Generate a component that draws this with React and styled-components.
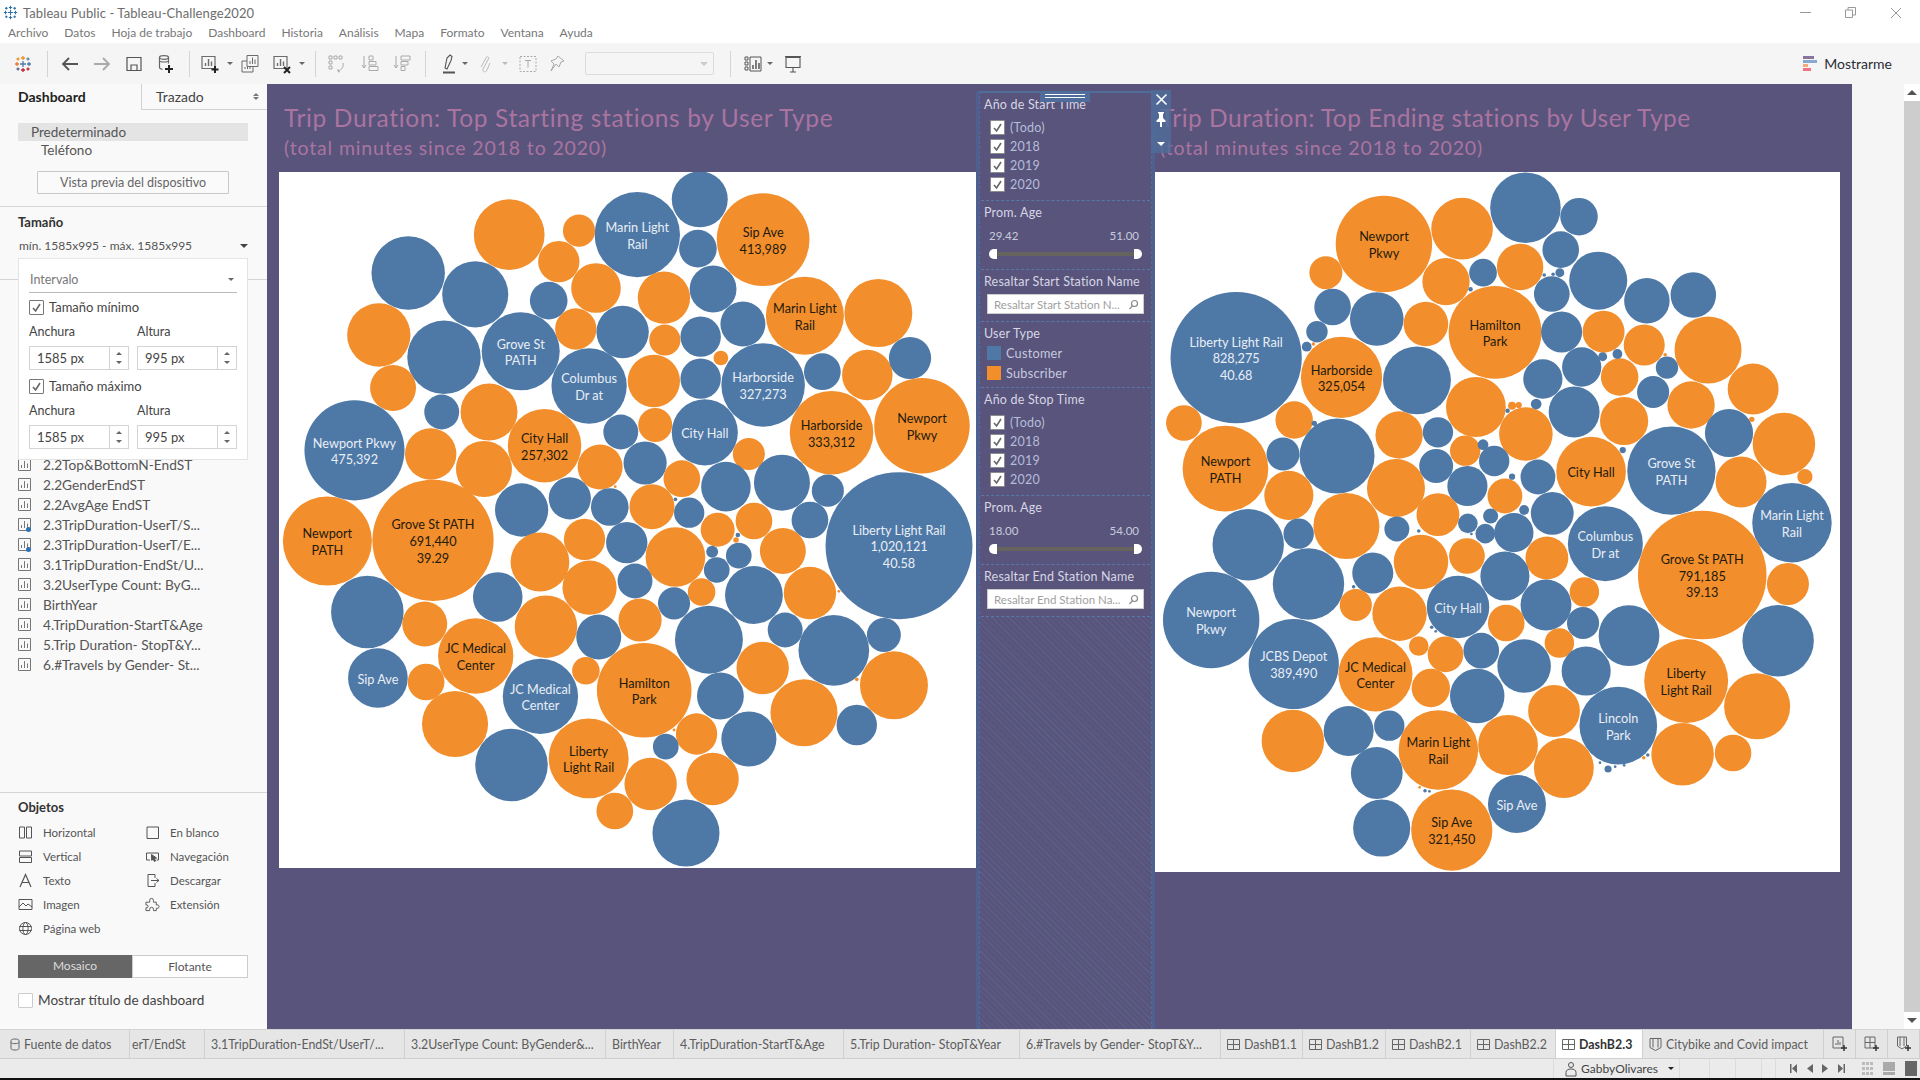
import React from 'react';
import styled, { createGlobalStyle } from 'styled-components';

const FONT = '"Lato", "Liberation Sans", sans-serif';
const BLUE = '#4e79a7';
const ORANGE = '#f28e2b';
const PURPLE = '#58547c';

const Global = createGlobalStyle`
  html, body { margin: 0; padding: 0; background: #fff; }
  body { font-family: ${FONT}; overflow: hidden; }
  * { box-sizing: border-box; }
`;

const Win = styled.div`width:1920px;height:1080px;display:flex;flex-direction:column;background:#fff;overflow:hidden;`;
const TitleBar = styled.div`height:22px;display:flex;align-items:center;padding:3px 18px 0 3px;font-size:13px;color:#6d6d6d;`;
const TitleText = styled.span`margin-left:5px;letter-spacing:.1px;`;
const WinBtns = styled.div`margin-left:auto;display:flex;gap:34px;align-items:center;`;
const MenuBar = styled.div`height:21px;display:flex;align-items:center;gap:16px;padding-left:8px;font-size:12px;color:#777;`;
const Toolbar = styled.div`height:41px;background:#f5f5f5;display:flex;align-items:center;`;
const Tool = styled.div`flex:none;width:${p=>p.$w||20}px;margin-left:${p=>p.$ml||0}px;height:24px;display:flex;align-items:center;justify-content:center;`;
const Sep = styled.div`flex:none;width:1px;height:26px;background:#d4d4d4;margin-left:${p=>p.$ml}px;`;
const ToolSelect = styled.div`flex:none;width:129px;height:23px;margin-left:18px;border:1px solid #dcdcdc;border-radius:2px;display:flex;align-items:center;justify-content:flex-end;padding-right:5px;`;
const Caret = styled.span`display:inline-block;width:0;height:0;border-left:${p=>p.$s||3}px solid transparent;border-right:${p=>p.$s||3}px solid transparent;border-top:${p=>p.$s||3}px solid ${p=>p.$c||'#777'};`;
const CaretUp = styled(Caret)`border-top:0;border-bottom:${p=>p.$s||3}px solid ${p=>p.$c||'#777'};`;
const ShowMe = styled.div`margin-left:auto;margin-right:28px;display:flex;align-items:center;gap:6px;font-size:14px;color:#2d2d35;`;

const Body = styled.div`height:945px;display:flex;`;

const Side = styled.aside`width:267px;flex:none;background:#f9f9f9;position:relative;display:flex;flex-direction:column;font-size:12px;color:#555;`;
const SideTabs = styled.div`height:26px;display:flex;flex:none;`;
const SideTab = styled.div`width:${p=>p.$w}px;font-size:14px;display:flex;align-items:center;padding-left:${p=>p.$active?18:14}px;padding-right:8px;padding-bottom:1px;justify-content:space-between;font-weight:${p=>p.$active?700:400};color:${p=>p.$active?'#222':'#444'};${p=>!p.$active&&'border-left:1px solid #d2d2d2;border-bottom:1px solid #d2d2d2;'}`;
const Updown = styled.span`display:flex;flex-direction:column;gap:1px;`;
const DeviceSec = styled.section`height:97px;flex:none;padding:13px 19px 0 18px;border-bottom:1px solid #d6d6d6;`;
const DevRow = styled.div`height:18px;line-height:18px;font-size:13.5px;color:#555;padding-left:${p=>p.$in}px;${p=>p.$on&&'background:#e4e4e4;'}`;
const DevBtn = styled.div`width:192px;height:23px;margin:12px 0 0 19px;background:#fafafa;border:1px solid #c8c8c8;border-radius:1px;font-size:12.5px;line-height:21px;text-align:center;color:#666;`;
const SizeSec = styled.section`height:73px;flex:none;padding:6px 19px 0 18px;border-bottom:1px solid #d6d6d6;`;
const Heading = styled.div`font-size:13px;font-weight:700;color:#333;line-height:18px;`;
const SizeVal = styled.div`display:flex;justify-content:space-between;align-items:center;margin:7px 0 0 1px;font-size:12px;color:#555;`;
const Pop = styled.div`position:absolute;left:18px;top:174px;width:230px;height:202px;background:#fff;border:1px solid #e4e4e4;padding:12px 10px 0 10px;`;
const PopSelect = styled.div`height:22px;border-bottom:1px solid #bbb;display:flex;align-items:center;justify-content:space-between;font-size:12.5px;color:#777;padding:0 3px 4px 1px;`;
const CheckRow = styled.div`display:flex;align-items:center;gap:5px;font-size:13px;color:#444;height:16px;margin-top:${p=>p.$mt}px;`;
const Box = styled.span`width:15px;height:15px;flex:none;background:#fff;border:1px solid ${p=>p.$c||'#777'};border-radius:1px;display:flex;align-items:center;justify-content:center;`;
const Fields = styled.div`display:grid;grid-template-columns:100px 100px;column-gap:8px;margin-top:9px;`;
const Label = styled.div`font-size:12.5px;color:#444;line-height:16px;`;
const NumInput = styled.div`height:24px;margin-top:6px;border:1px solid #d4d4d4;display:flex;align-items:center;justify-content:space-between;font-size:13px;color:#444;padding-left:7px;`;
const Spin = styled.div`width:19px;height:100%;border-left:1px solid #d4d4d4;display:flex;flex-direction:column;align-items:center;justify-content:center;gap:6px;`;
const List = styled.ul`flex:1;margin:0;padding:174px 0 0 18px;list-style:none;border-bottom:1px solid #d6d6d6;overflow:hidden;`;
const Item = styled.li`height:20px;display:flex;align-items:center;gap:12px;font-size:13.7px;color:#555;white-space:nowrap;position:relative;`;
const Dot = styled.span`position:absolute;left:8px;top:13px;width:5px;height:5px;border-radius:50%;background:#2f73b5;`;
const ObjSec = styled.section`height:236px;flex:none;padding:5px 19px 0 18px;`;
const ObjGrid = styled.div`display:grid;grid-template-columns:127px 100px;grid-auto-rows:24px;margin-top:4px;`;
const Obj = styled.div`display:flex;align-items:center;gap:10px;font-size:11.5px;color:#555;`;
const ObjIcon = styled.span`width:15px;display:flex;justify-content:center;flex:none;`;
const Seg = styled.div`display:flex;height:23px;margin-top:15px;`;
const SegBtn = styled.div`flex:1;font-size:12px;line-height:22px;text-align:center;${p=>p.$on?'background:#666;color:#ddd;':'background:#fff;color:#555;border:1px solid #ccc;'}`;
const ShowTitle = styled.div`display:flex;align-items:center;gap:5px;margin-top:14px;font-size:13.6px;color:#444;`;

const Canvas = styled.main`width:1585px;flex:none;background:${PURPLE};display:flex;padding-left:12px;`;
const Col = styled.div`display:flex;flex-direction:column;flex:none;width:${p=>p.$w}px;`;
const Titles = styled.div`height:88px;padding:19px 0 0 ${p=>p.$x}px;color:#aa74a0;white-space:nowrap;`;
const T1 = styled.div`font-size:24.5px;line-height:29px;letter-spacing:${p=>p.$ls}px;`;
const T2 = styled.div`font-size:19.5px;line-height:25px;margin-top:3px;letter-spacing:.85px;`;
const Plot = styled.svg`display:block;background:#fff;flex:none;`;
const Bubble = styled.circle`fill:${p=>p.$k==='b'?BLUE:ORANGE};`;
const BubbleText = styled.text`font-family:${FONT};font-size:12.7px;text-anchor:middle;fill:${p=>p.$k==='b'?'#e9eef5':'#231a0e'};`;

const FilterWrap = styled.div`flex:none;width:179px;position:relative;z-index:2;margin-top:7px;background:${PURPLE};border:solid #4f5f90;border-width:0 3px;`;
const FilterInner = styled.div`height:100%;display:flex;flex-direction:column;border-top:2px solid #4f6c9a;border-left:1px dashed #4f6c9a;border-right:1px dashed #4f6c9a;color:#d6d6e4;font-size:12.5px;`;
const Handle = styled.div`position:absolute;left:61px;top:0;width:50px;height:11px;background:#4f6c9a;display:flex;flex-direction:column;gap:2px;align-items:center;padding-top:3px;`;
const HandleLine = styled.span`display:block;width:40px;height:1px;background:#fff;`;
const Strip = styled.div`position:absolute;left:172px;top:-1px;width:20px;height:63px;background:rgba(79,108,154,.82);display:flex;flex-direction:column;align-items:center;padding-top:3px;gap:6px;`;
const Fsec = styled.div`height:${p=>p.$h}px;flex:none;padding:4px 7px 0 4px;position:relative;&::after{content:'';position:absolute;left:1px;right:1px;bottom:0;border-bottom:1px dashed #5878a8;}`;
const Ftitle = styled.div`line-height:16px;letter-spacing:.2px;white-space:nowrap;`;
const Gap = styled.div`height:${p=>p.$h}px;`;
const Frow = styled.div`height:19px;display:flex;align-items:center;gap:5px;padding-left:6px;color:#b6bdd9;font-size:12.5px;letter-spacing:.25px;`;
const FRange = styled.div`display:flex;justify-content:space-between;padding:0 5px 0 5px;margin-top:7px;font-size:11.5px;line-height:15px;color:#c8cbdb;`;
const Track = styled.div`position:relative;height:4px;background:#66635e;margin:9px 9px 0 11px;`;
const Thumb = styled.span`position:absolute;top:-3px;width:8px;height:10px;background:#fff;${p=>p.$r?'right:-7px;border-radius:0 5px 5px 0;':'left:-6px;border-radius:5px 0 0 5px;'}`;
const Search = styled.div`height:20px;margin:4px 0 0 3px;background:#fff;border:1px solid #ccc;display:flex;align-items:center;justify-content:space-between;padding:0 4px 0 6px;font-size:11.5px;color:#a0a0a0;white-space:nowrap;`;
const Legend = styled.div`height:20px;display:flex;align-items:center;gap:5px;padding-left:3px;color:#c6cadf;font-size:12.7px;letter-spacing:.25px;`;
const Swatch = styled.span`width:14px;height:14px;background:${p=>p.$c};`;
const Hatch = styled.div`flex:1;background:repeating-linear-gradient(45deg,transparent 0 3px,rgba(98,120,165,.28) 3px 4px);`;

const Gutter = styled.div`flex:1;background:#f5f5f5;display:flex;justify-content:flex-end;`;
const Scroll = styled.div`width:16px;display:flex;flex-direction:column;background:#f1f1f1;`;
const ScrollBtn = styled.div`height:17px;background:#fff;display:flex;align-items:center;justify-content:center;flex:none;`;
const ScrollThumb = styled.div`flex:1;background:#cdcdcd;`;

const Tabs = styled.div`height:30px;display:flex;background:#e6e6e6;border-top:1px solid #d4d4d4;border-bottom:1px solid #cfcfcf;flex:none;`;
const TabCell = styled.div`width:${p=>p.$w}px;flex:none;display:flex;align-items:center;gap:4px;padding-left:${p=>p.$pl??6}px;overflow:hidden;white-space:nowrap;font-size:12.4px;border-right:1px solid #d0d0d0;color:${p=>p.$on?'#333':'#5d5d5d'};${p=>p.$on&&'background:#fff;font-weight:700;'}`;
const TabLabel = styled.span`flex:none;`;
const Status = styled.div`height:19px;background:#ebebeb;display:flex;align-items:center;justify-content:flex-end;flex:none;font-size:12px;color:#444;`;
const StatusCell = styled.div`display:flex;align-items:center;height:100%;width:${p=>p.$w}px;gap:${p=>p.$g||0}px;padding-left:${p=>p.$pl||0}px;border-left:1px solid ${p=>p.$nb?'transparent':'#dcdcdc'};`;
const StatusCaret = styled.span`margin-left:6px;display:flex;`;
const Black = styled.div`height:2px;background:#111;flex:none;`;

/* ---- icons ---- */
const I = ({w=18,h=18,vb,children,sw=1.2,c='#6b6b6b'}) => (
  <svg width={w} height={h} viewBox={vb||`0 0 ${w} ${h}`} fill="none" stroke={c} strokeWidth={sw}>{children}</svg>
);
const Logo = ({s=18, mono}) => {
  const col = (k)=> mono ? '#2f6fa8' : k;
  const cross = (x,y,l,k) => <path key={x+'-'+y} d={`M${x-l} ${y}H${x+l}M${x} ${y-l}V${y+l}`} stroke={col(k)} strokeWidth="1.3" fill="none"/>;
  return <svg width={s} height={s} viewBox="0 0 18 18">
    {cross(9,9,3,'#4e79a7')}{cross(9,3,2,'#f28e2b')}{cross(9,15,2,'#c72035')}
    {cross(3,9,2,'#e8762c')}{cross(15,9,2,'#4e79a7')}{cross(4,4,1.5,'#f28e2b')}
    {cross(14,4,1.5,'#59879b')}{cross(4,14,1.5,'#5b6591')}{cross(14,14,1.5,'#c72035')}
  </svg>;
};
const SheetIcon = ({mark}) => (
  <I w={20} h={20}>
    <path d="M2 2.5h13v12H2z" />
    <path d="M5.5 12V9M8.5 12V5M11.5 12V7.5" strokeWidth="1.4"/>
    {mark==='+' && <path d="M15 12v7M11.5 15.5h7" stroke="#222" strokeWidth="2"/>}
    {mark==='x' && <path d="M12 13l6 6M18 13l-6 6" stroke="#222" strokeWidth="2"/>}
  </I>
);
const MiniSheet = () => (
  <I w={13} h={13} sw={1} c="#777"><path d="M.5.5h12v12H.5z"/><path d="M3.5 10V7M6.5 10V3M9.5 10V5.5"/></I>
);
const Check = () => <I w={11} h={11} sw={1.6} c="#666"><path d="M2 6l2.6 3L9 2"/></I>;
const Tri = () => <Caret $s={3} $c="#666"/>;

const DashIcon = () => <I w={13} h={13} sw={1} c="#666"><path d="M.5 1.5h12v10H.5zM6.5 1.5v10M.5 6.5h12"/></I>;
const StoryIcon = () => <I w={13} h={14} sw={1} c="#666"><path d="M1 1.5h11v9l-5.5 3-5.5-3zM4 1.5v9M9 1.5v9"/></I>;

/* ---- bubble data, measured from crops of the reference ---- */
const leftA = [
['b',936,118,61],['b',800,224,93,'Marin Light|Rail'],['o',521,224,77],['o',673,212,35],['b',932,266,41],['o',1074,239,101,'Sip Ave|413,989'],
['b',301,339,80],['b',447,403,72],['o',629,305,45],['o',710,384,54],['b',607,422,41],['o',858,413,57],['b',965,387,51],
['o',1165,467,85,'Marin Light|Rail'],['o',1325,459,74],['o',237,525,69],['b',379,592,80],['b',546,574,85,'Grove St|PATH'],['o',666,507,45],
['b',768,516,57],['o',860,540,34],['b',938,530,44],['b',1030,492,49],['o',982,594,16],['b',695,678,82,'Columbus|Dr at'],['o',836,663,57],
['b',938,656,44],['b',1074,675,91,'Harborside|327,273'],['b',1203,635,40],['o',1301,645,55],['b',1394,594,46],['o',268,684,50],['b',374,756,38],
['o',477,756,62],['o',598,857,80,'City Hall|257,302'],['b',764,816,38],['o',839,795,37],['b',947,817,72,'City Hall'],['o',1223,818,91,'Harborside|333,312'],
['o',1420,797,104,'Newport|Pkwy'],['b',184,871,109,'Newport Pkwy|475,392'],['o',350,882,56],['o',466,927,61],['o',719,921,49],['b',817,909,47],
['o',897,956,40],['o',1043,882,35],['b',993,980,54],['b',1115,968,61],['b',1215,992,35],['b',653,1015,46],['b',740,1041,41],['o',832,1040,49],
['b',913,1058,33],['o',752,980,3],['b',883,1018,4],
];
const leftB = [
['o',125,63,97,'Newport|PATH'],['o',355,61,132,'Grove St PATH|691,440|39.29'],['b',548,-30,58],['o',685,58,45],['o',975,29,37],['o',1054,3,40],['b',1176,0,40],
['b',1370,77,160,'Liberty Light Rail|1,020,121|40.58'],['b',777,68,45],['o',588,126,64],['o',883,111,65],['b',963,95,13],['b',1021,107,28],['o',1117,93,50],
['b',973,150,28],['o',1015,60,6],['b',1019,45,5],['b',795,183,38],['o',696,203,59],['o',940,216,30],['b',880,250,35],['b',1054,225,63],['o',1176,219,57],
['b',496,231,54],['b',212,276,79],['o',337,312,49],['o',601,320,68],['o',806,300,47],['b',716,351,49],['b',956,359,74],['b',1122,330,38],['b',1228,391,77],
['b',1337,345,37],['o',448,408,82,'JC Medical|Center'],['b',235,474,65,'Sip Ave'],['o',340,486,40],['b',589,529,82,'JC Medical|Center'],['o',688,452,30],
['o',815,511,103,'Hamilton|Park'],['o',1073,444,57],['b',981,528,51],['o',1163,578,73],['o',1359,496,74],['b',1278,615,44],['o',403,612,72],['o',929,642,45],
['b',1043,657,60],['b',862,680,28],['b',526,735,79],['o',694,715,87,'Liberty|Light Rail'],['o',829,792,57],['o',964,777,57],['o',751,873,40],['b',906,939,73],
['o',1239,214,3],['o',1278,478,4],['o',880,630,3],
];
const rightA = [
['b',841,143,79],['b',961,170,42],['o',524,252,108,'Newport|Pkwy'],['o',699,206,69],['b',920,269,41],['o',829,321,52],['o',394,338,37],['o',663,365,53],
['b',746,338,31],['b',1004,362,65],['b',900,402,40],['b',1113,422,51],['b',1217,405,51],['b',409,441,41],['b',508,477,60],['o',618,492,50],
['o',773,517,104,'Hamilton|Park'],['b',922,516,46],['o',1016,515,47],['o',1107,555,46],['o',1250,570,75],['b',374,515,24],['b',351,560,11],
['b',193,593,147,'Liberty Light Rail|828,275|40.68'],['o',429,652,91,'Harborside|325,054'],['b',598,661,76],['b',880,657,44],['b',967,621,44],['o',1052,651,42],
['b',1158,623,25],['b',1127,696,36],['o',1351,687,57],['o',730,741,67],['o',1212,735,53],['b',950,756,57],['o',1062,783,54],['o',842,822,60],['b',1297,819,54],
['o',1420,852,70],['o',76,789,40],['o',323,780,42],['o',558,825,53],['b',645,817,34],['o',169,926,96,'Newport|PATH'],['b',298,882,37],['b',419,888,84],
['o',706,872,34],['b',771,903,34],['b',869,951,39],['o',988,935,78,'City Hall'],['b',1168,932,99,'Grove St|PATH'],['o',1324,966,57],['o',1467,950,17],
['o',311,1006,55],['o',551,984,65],['b',641,918,38],['b',711,978,45],['o',795,1008,39],['b',1438,1088,89,'Marin Light|Rail'],['b',901,1060,48],
['b',763,1068,17],['b',838,1050,11],['b',865,732,12],['o',811,737,9],['o',826,735,7],['b',1014,590,10],['b',1047,582,11],['b',1059,870,7],['b',746,854,12],
['o',1348,778,6],['b',918,338,10],['b',718,388,5],['b',368,790,6],['b',801,752,5],['b',811,950,7],['o',1154,584,4],['o',366,552,4],['b',883,345,4],['b',903,343,4],
];
const rightB = [
['b',1020,71,84,'Columbus|Dr at'],['o',1237,165,144,'Grove St PATH|791,185|39.13'],['o',440,18,74],['o',645,-16,48],['b',220,74,80],['b',333,41,34],['b',553,27,28],
['b',712,10,22],['b',751,41,22],['b',815,38,44],['o',607,126,61],['o',710,108,40],['b',499,159,46],['o',889,114,48],['b',795,168,55],['b',887,255,57],['o',973,216,33],
['b',970,309,36],['b',1073,347,68],['o',1429,192,47],['b',1407,362,80],['b',137,300,108,'Newport|Pkwy'],['b',355,192,80],['o',461,255,36],['o',559,281,61],
['b',690,261,70,'City Hall'],['o',798,309,41],['o',917,369,33],['b',742,392,40],['o',662,403,40],['o',602,378,22],['b',322,432,101,'JCBS Depot|389,490'],
['o',505,463,83,'JC Medical|Center'],['o',629,504,43],['b',733,528,61],['b',838,438,60],['b',977,453,55],['o',1201,483,94,'Liberty|Light Rail'],['o',1360,559,74],
['o',905,573,58],['b',1049,617,87,'Lincoln|Park'],['o',320,663,70],['b',445,633,56],['b',536,617,34],['o',646,690,89,'Marin Light|Rail'],['o',802,675,67],
['o',927,744,67],['o',1193,703,70],['o',1306,699,41],['b',508,759,58],['b',519,924,64],['o',676,930,91,'Sip Ave|321,450'],['b',822,852,65,'Sip Ave'],
['b',1026,747,8],['b',1115,705,4],['o',1106,713,4],['b',1062,736,3],['b',1042,740,3],['b',1008,728,3],['b',616,812,4],['b',626,814,3],['o',604,802,3],['b',456,200,4],['b',631,322,4],['b',602,33,4],['b',640,334,3],['b',720,42,3],
];

const project = (rows, sx, ox, oy) => rows.map(([k,x,y,rx,label]) => ({ k, cx:x/sx+ox, cy:y/3+oy, r:rx/sx, lines:label?label.split('|'):[] }));
const leftData = [...project(leftA,2.178,-9,-12), ...project(leftB,2.178,-9,348)];
const rightData = [...project(rightA,2.24,-5,-12), ...project(rightB,2.24,-5,348)];

const Chart = ({data,w,h}) => (
  <Plot width={w} height={h} viewBox={`0 0 ${w} ${h}`}>
    {data.map((d,i)=><Bubble key={i} $k={d.k} cx={d.cx} cy={d.cy} r={d.r}/>)}
    {data.filter(d=>d.lines.length).map((d,i)=>(
      <BubbleText key={i} $k={d.k} x={d.cx} y={d.cy+5.5-(d.lines.length-1)*8.3}>
        {d.lines.map((l,j)=><tspan key={j} x={d.cx} dy={j?16.7:0}>{l}</tspan>)}
      </BubbleText>
    ))}
  </Plot>
);

const FSearchIcon = () => <I w={11} h={11} sw={1.2} c="#888"><circle cx="6.5" cy="4.5" r="3"/><path d="M4.5 6.8L1.5 10"/></I>;

const YearFilter = ({title,h}) => (
  <Fsec $h={h}>
    <Ftitle>{title}</Ftitle>
    <Gap $h={5}/>
    {['(Todo)','2018','2019','2020'].map(y=><Frow key={y}><Box $c="#8d8d8d"><Check/></Box>{y}</Frow>)}
  </Fsec>
);
const AgeFilter = ({lo,hi,h}) => (
  <Fsec $h={h}>
    <Ftitle>Prom. Age</Ftitle>
    <FRange><span>{lo}</span><span>{hi}</span></FRange>
    <Track><Thumb/><Thumb $r/></Track>
  </Fsec>
);
const Highlight = ({title,ph,h}) => (
  <Fsec $h={h}>
    <Ftitle>{title}</Ftitle>
    <Search>{ph}<FSearchIcon/></Search>
  </Fsec>
);

const sheets = ['2.2Top&BottomN-EndST','2.2GenderEndST','2.2AvgAge EndST','2.3TripDuration-UserT/S...','2.3TripDuration-UserT/E...','3.1TripDuration-EndSt/U...','3.2UserType Count: ByG...','BirthYear','4.TripDuration-StartT&Age','5.Trip Duration- StopT&Y...','6.#Travels by Gender- St...'];

const objects = [
  ['Horizontal',<I w={15} h={15} sw={1} c="#555"><path d="M1.5 2h5v11h-5zM8.5 2h5v11h-5z"/></I>],
  ['En blanco',<I w={15} h={15} sw={1} c="#555"><path d="M2 2h11.5v11.5H2z"/></I>],
  ['Vertical',<I w={15} h={15} sw={1} c="#555"><path d="M1.5 2h12v5h-12zM1.5 8.5h12v5h-12z"/></I>],
  ['Navegación',<I w={15} h={15} sw={1} c="#555"><path d="M5 11H1.5V4h12v7h-2"/><path d="M6.5 5.5l5 3.5-2 .6 1 2.4-1.2.5-1-2.4-1.6 1.2z" fill="#555"/></I>],
  ['Texto',<I w={15} h={15} sw={1.2} c="#555"><path d="M2 14L7.5 1.5 13 14M4 9.5h7"/></I>],
  ['Descargar',<I w={15} h={15} sw={1} c="#555"><path d="M10 5V1.5H3v12h7V10M6 7.5h8M11.5 5.5l2.5 2-2.5 2"/></I>],
  ['Imagen',<I w={15} h={15} sw={1} c="#555"><path d="M1 2.5h13v10H1z"/><path d="M1 10l4-4 3 3 2-2 4 3"/></I>],
  ['Extensión',<I w={16} h={15} sw={1} c="#555"><path d="M1 5h4V3a2 2 0 014 0v2h3v3h2a2 2 0 010 3.5h-2V14H9v-1.5a2 2 0 00-4 0V14H1v-3h1.5a2 2 0 000-3H1z"/></I>],
  ['Página web',<I w={15} h={15} sw={1} c="#555"><circle cx="7.5" cy="7.5" r="6"/><ellipse cx="7.5" cy="7.5" rx="2.6" ry="6"/><path d="M1.5 5.5h12M1.5 9.5h12"/></I>],
];

const tabs = [
  {w:130,t:'Fuente de datos',ic:<I w={10} h={13} sw={1} c="#666"><path d="M1 2.5c0-2 8-2 8 0v8c0 2-8 2-8 0zM1 4.5c0 1.5 8 1.5 8 0"/></I>,pl:10},
  {w:75,t:'erT/EndSt',pl:2},
  {w:200,t:'3.1TripDuration-EndSt/UserT/...'},
  {w:201,t:'3.2UserType Count: ByGender&...'},
  {w:68,t:'BirthYear'},
  {w:170,t:'4.TripDuration-StartT&Age'},
  {w:176,t:'5.Trip Duration- StopT&Year'},
  {w:201,t:'6.#Travels by Gender- StopT&Y...'},
  {w:82,t:'DashB1.1',ic:<DashIcon/>},
  {w:83,t:'DashB1.2',ic:<DashIcon/>},
  {w:85,t:'DashB2.1',ic:<DashIcon/>},
  {w:85,t:'DashB2.2',ic:<DashIcon/>},
  {w:87,t:'DashB2.3',ic:<DashIcon/>,on:true},
  {w:181,t:'Citybike and Covid impact',ic:<StoryIcon/>},
];

const SpinBox = () => <Spin><CaretUp $s={3} $c="#666"/><Caret $s={3} $c="#666"/></Spin>;

export default function App(){
  return (
    <Win>
      <Global/>
      <TitleBar>
        <Logo s={15} mono/>
        <TitleText>Tableau Public - Tableau-Challenge2020</TitleText>
        <WinBtns>
          <I w={11} h={11} sw={1} c="#999"><path d="M0 5.5h11"/></I>
          <I w={11} h={11} sw={1} c="#999"><path d="M.5 3h7v7.5h-7zM3 3V.5h7.5V8H8"/></I>
          <I w={12} h={12} sw={1} c="#999"><path d="M1 1l10 10M11 1L1 11"/></I>
        </WinBtns>
      </TitleBar>
      <MenuBar>
        {['Archivo','Datos','Hoja de trabajo','Dashboard','Historia','Análisis','Mapa','Formato','Ventana','Ayuda'].map(m=><span key={m}>{m}</span>)}
      </MenuBar>
      <Toolbar>
        <Tool $ml={13}><Logo s={18}/></Tool>
        <Sep $ml={14}/>
        <Tool $ml={12}><I w={18} h={16} sw={1.8} c="#555"><path d="M17 8H2M8 2L2 8l6 6"/></I></Tool>
        <Tool $ml={12}><I w={18} h={16} sw={1.8} c="#aaa"><path d="M1 8h15M10 2l6 6-6 6"/></I></Tool>
        <Tool $ml={12}><I w={16} h={16} c="#555"><path d="M1 1.5h14v13H1zM5 14.5V9h6v5.5"/></I></Tool>
        <Tool $ml={12}><I w={20} h={20} c="#666"><ellipse cx="8" cy="3.5" rx="4.5" ry="1.8"/><path d="M3.5 3.5v10c0 1 1.5 1.6 3 1.8M12.5 3.5v6M3.5 6.5c0 2 9 2 9 0"/><path d="M13 11v8M9 15h8" stroke="#222" strokeWidth="2"/></I></Tool>
        <Sep $ml={13}/>
        <Tool $ml={10}><SheetIcon mark="+"/></Tool>
        <Tool $w={8} $ml={6}><Tri/></Tool>
        <Tool $ml={6}><I w={20} h={20} sw={1}><path d="M7 1.5h11v11H7zM2 7h5M2 7v11h11v-5"/><path d="M10 10V7M12.5 10V3.5M15 10V5.5M5 15v-2M7.5 15v-2M10 15v-2"/></I></Tool>
        <Tool $ml={12}><SheetIcon mark="x"/></Tool>
        <Tool $w={8} $ml={6}><Tri/></Tool>
        <Sep $ml={9}/>
        <Tool $ml={11}><I w={18} h={18} sw={1} c="#aaa"><path d="M1 1h3v3H1zM6 1h3v3H6zM11 1h3v3h-3zM1 6h3v3H1zM1 11h3v3H1zM15 8c1 3-1 7-5 8M10 14l0 2.5 2 .5"/></I></Tool>
        <Tool $ml={13}><I w={18} h={18} sw={1} c="#aaa"><path d="M3 1v12M1 10l2 3 2-3M8 1h4v4H8zM8 6.5h7v3.5H8zM8 11.5h9v4H8z"/></I></Tool>
        <Tool $ml={12}><I w={18} h={18} sw={1} c="#aaa"><path d="M3 1v12M1 10l2 3 2-3M8 1h9v4H8zM8 6.5h7v3.5H8zM8 11.5h4v4H8z"/></I></Tool>
        <Sep $ml={13}/>
        <Tool $ml={13}><I w={14} h={20} sw={1.1} c="#555"><path d="M3 14L5 4l3-3 2 1.5-1 4L5 15zM2 18.5h10" /><path d="M1 18.5h12" strokeWidth="2"/></I></Tool>
        <Tool $w={8} $ml={2}><Tri/></Tool>
        <Tool $ml={6}><I w={14} h={18} sw={1} c="#bbb"><path d="M11 3L5 14c-1 3 3 4 4 1l3-7M11 3c-1-2-3-1-3 0L3 12"/></I></Tool>
        <Tool $w={8} $ml={6}><Caret $s={3} $c="#bbb"/></Tool>
        <Tool $ml={9}><I w={18} h={18} sw={1} c="#aaa"><path d="M1 1.5h16v15H1z" strokeDasharray="2 1.5"/><path d="M6 5.5h6M9 5.5v7"/></I></Tool>
        <Tool $ml={9}><I w={16} h={18} sw={1} c="#aaa"><path d="M9 1l6 5-3 1-2 5-3-3-5 7 3-7-3-3 5-2z"/></I></Tool>
        <ToolSelect><Caret $s={4} $c="#ccc"/></ToolSelect>
        <Sep $ml={16}/>
        <Tool $ml={12}><I w={18} h={16} sw={1} c="#555"><path d="M1 1h3v3H1zM1 6h3v3H1zM1 11h3v3H1zM6 1h11v14H6z"/><path d="M9 13V9M12 13V4M15 13V7" strokeWidth="1.5"/></I></Tool>
        <Tool $w={8} $ml={3}><Tri/></Tool>
        <Tool $ml={9}><I w={16} h={18} sw={1.1} c="#555"><path d="M1 2.5h14v10H1zM0 1.5h16M8 12.5v4M5 17h6"/></I></Tool>
        <ShowMe>
          <svg width="15" height="15" viewBox="0 0 15 15"><path d="M0 0h11v3H0z" fill="#8a739c"/><path d="M0 4h14v3H0z" fill="#87a8cf"/><path d="M0 8h5v3H0z" fill="#f4a97c"/><path d="M0 12h8v3H0z" fill="#ee7482"/></svg>
          Mostrarme
        </ShowMe>
      </Toolbar>

      <Body>
        <Side>
          <SideTabs>
            <SideTab $w={141} $active>Dashboard</SideTab>
            <SideTab $w={126}>Trazado<Updown><CaretUp $s={3}/><Caret $s={3}/></Updown></SideTab>
          </SideTabs>
          <DeviceSec>
            <DevRow $in={13} $on>Predeterminado</DevRow>
            <DevRow $in={23}>Teléfono</DevRow>
            <DevBtn>Vista previa del dispositivo</DevBtn>
          </DeviceSec>
          <SizeSec>
            <Heading>Tamaño</Heading>
            <SizeVal>mín. 1585x995 - máx. 1585x995<Caret $s={4} $c="#444"/></SizeVal>
          </SizeSec>
          <List>
            {sheets.map((s,i)=><Item key={s}><MiniSheet/>{s}{(i===3||i===4)&&<Dot/>}</Item>)}
          </List>
          <ObjSec>
            <Heading>Objetos</Heading>
            <ObjGrid>
              {objects.map(([t,ic])=><Obj key={t}><ObjIcon>{ic}</ObjIcon>{t}</Obj>)}
            </ObjGrid>
            <Seg><SegBtn $on>Mosaico</SegBtn><SegBtn>Flotante</SegBtn></Seg>
            <ShowTitle><Box $c="#ccc"/>Mostrar título de dashboard</ShowTitle>
          </ObjSec>
          <Pop>
            <PopSelect>Intervalo<Caret $s={3.5} $c="#666"/></PopSelect>
            <CheckRow $mt={6}><Box><Check/></Box>Tamaño mínimo</CheckRow>
            <Fields>
              <div><Label>Anchura</Label><NumInput>1585 px<SpinBox/></NumInput></div>
              <div><Label>Altura</Label><NumInput>995 px<SpinBox/></NumInput></div>
            </Fields>
            <CheckRow $mt={8}><Box><Check/></Box>Tamaño máximo</CheckRow>
            <Fields>
              <div><Label>Anchura</Label><NumInput>1585 px<SpinBox/></NumInput></div>
              <div><Label>Altura</Label><NumInput>995 px<SpinBox/></NumInput></div>
            </Fields>
          </Pop>
        </Side>

        <Canvas>
          <Col $w={697}>
            <Titles $x={5}>
              <T1 $ls={.65}>Trip Duration: Top Starting stations by User Type</T1>
              <T2>(total minutes since 2018 to 2020)</T2>
            </Titles>
            <Chart data={leftData} w={697} h={696}/>
          </Col>
          <FilterWrap>
            <FilterInner>
              <YearFilter title="Año de Start Time" h={108}/>
              <AgeFilter lo="29.42" hi="51.00" h={69}/>
              <Highlight title="Resaltar Start Station Name" ph="Resaltar Start Station N..." h={52}/>
              <Fsec $h={66}>
                <Ftitle>User Type</Ftitle>
                <Gap $h={1}/>
                <Legend><Swatch $c={BLUE}/>Customer</Legend>
                <Legend><Swatch $c={ORANGE}/>Subscriber</Legend>
              </Fsec>
              <YearFilter title="Año de Stop Time" h={108}/>
              <AgeFilter lo="18.00" hi="54.00" h={69}/>
              <Highlight title="Resaltar End Station Name" ph="Resaltar End Station Na..." h={52}/>
              <Hatch/>
            </FilterInner>
            <Handle><HandleLine/><HandleLine/></Handle>
            <Strip>
              <I w={13} h={13} sw={1.6} c="#fff"><path d="M1.5 1.5l10 10M11.5 1.5l-10 10"/></I>
              <svg width="12" height="15" viewBox="0 0 12 15" fill="#fff"><path d="M3 0h6v1.5H8V6l2.5 2.5V10H7v5H5v-5H1.5V8.5L4 6V1.5H3z"/></svg>
              <Gap $h={3}/>
              <Caret $s={4.5} $c="#fff"/>
            </Strip>
          </FilterWrap>
          <Col $w={685}>
            <Titles $x={5}>
              <T1 $ls={.5}>Trip Duration: Top Ending stations by User Type</T1>
              <T2>(total minutes since 2018 to 2020)</T2>
            </Titles>
            <Chart data={rightData} w={685} h={700}/>
          </Col>
        </Canvas>

        <Gutter>
          <Scroll>
            <ScrollBtn><CaretUp $s={5} $c="#555"/></ScrollBtn>
            <ScrollThumb/>
            <ScrollBtn><Caret $s={5} $c="#555"/></ScrollBtn>
          </Scroll>
        </Gutter>
      </Body>

      <Tabs>
        {tabs.map(t=><TabCell key={t.t} $w={t.w} $on={t.on} $pl={t.pl}>{t.ic}<TabLabel>{t.t}</TabLabel></TabCell>)}
        <TabCell $w={32} $pl={8}><I w={16} h={16} sw={1} c="#666"><path d="M1 1h10v11H1zM4 9V7M6 9V4M8 9V6"/><path d="M12 9v6M9 12h6" stroke="#333" strokeWidth="1.5"/></I></TabCell>
        <TabCell $w={32} $pl={8}><I w={16} h={16} sw={1} c="#666"><path d="M1 1h10v11H1zM6 1v11M1 6.5h10"/><path d="M12 9v6M9 12h6" stroke="#333" strokeWidth="1.5"/></I></TabCell>
        <TabCell $w={32} $pl={8}><I w={16} h={16} sw={1} c="#666"><path d="M1.5 1h9v9l-4.5 3-4.5-3zM4 1v9M8 1v9"/><path d="M12 9v6M9 12h6" stroke="#333" strokeWidth="1.5"/></I></TabCell>
      </Tabs>
      <Status>
        <StatusCell $w={126} $pl={11} $g={4}>
          <I w={12} h={16} sw={1} c="#555"><circle cx="6" cy="4" r="2.5"/><path d="M1 15v-3.5C1 9 3 8 6 8s5 1 5 3.5V15z"/></I>
          GabbyOlivares
          <StatusCaret><Caret $s={3.5} $c="#222"/></StatusCaret>
        </StatusCell>
        <StatusCell $w={30}/>
        <StatusCell $w={26}/>
        <StatusCell $w={26}/>
        <StatusCell $w={14}/>
        <StatusCell $w={80} $pl={14} $g={9.5}>
          <svg width="7" height="9" viewBox="0 0 7 9" fill="#666"><path d="M0 0h1.5v9H0zM7 0v9L2 4.5z"/></svg>
          <svg width="6" height="9" viewBox="0 0 6 9" fill="#666"><path d="M6 0v9L0 4.5z"/></svg>
          <svg width="6" height="9" viewBox="0 0 6 9" fill="#666"><path d="M0 0v9l6-4.5z"/></svg>
          <svg width="7" height="9" viewBox="0 0 7 9" fill="#666"><path d="M0 0v9l5-4.5zM5.5 0H7v9H5.5z"/></svg>
        </StatusCell>
        <StatusCell $w={65} $pl={6} $g={10} $nb>
          <svg width="11" height="13" viewBox="0 0 11 13" fill="#bbb"><path d="M0 0h3v3H0zM4 0h3v3H4zM8 0h3v3H8zM0 5h3v3H0zM4 5h3v3H4zM8 5h3v3H8zM0 10h3v3H0zM4 10h3v3H4zM8 10h3v3H8z"/></svg>
          <svg width="12" height="13" viewBox="0 0 12 13" fill="#aaa"><path d="M0 0h12v9H0zM0 10h12v3H0z"/></svg>
          <svg width="12" height="15" viewBox="0 0 12 15" fill="#666"><path d="M0 0h12v15H0z"/></svg>
        </StatusCell>
      </Status>
      <Black/>
    </Win>
  );
}
